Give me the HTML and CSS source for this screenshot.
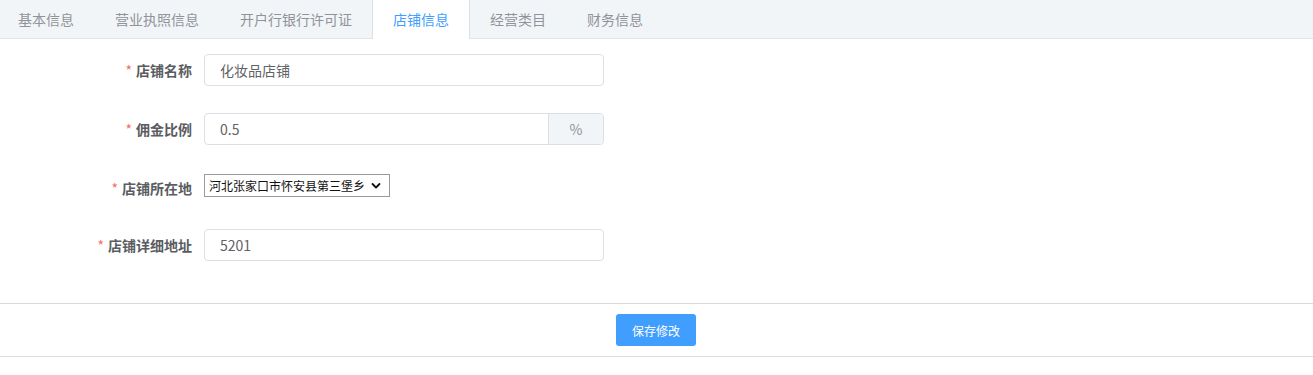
FILE: index.html
```html
<!DOCTYPE html>
<html lang="zh">
<head>
<meta charset="utf-8">
<title>店铺信息</title>
<link rel="stylesheet" href="styles.css">
</head>
<body>
<div class="card">
  <div class="tabs-header">
    <div class="tabs-nav">
      <div class="tab">基本信息</div>
      <div class="tab">营业执照信息</div>
      <div class="tab">开户行银行许可证</div>
      <div class="tab active">店铺信息</div>
      <div class="tab">经营类目</div>
      <div class="tab">财务信息</div>
    </div>
  </div>
  <div class="tabs-content">
    <form class="form">
      <div class="form-item">
        <label class="label"><span class="req">*</span>店铺名称</label>
        <div class="control">
          <div class="input"><span class="value">化妆品店铺</span></div>
        </div>
      </div>
      <div class="form-item">
        <label class="label"><span class="req">*</span>佣金比例</label>
        <div class="control">
          <div class="input group"><span class="value">0.5</span><span class="append">%</span></div>
        </div>
      </div>
      <div class="form-item form-item-select">
        <label class="label"><span class="req">*</span>店铺所在地</label>
        <div class="control">
          <div class="select"><span>河北张家口市怀安县第三堡乡</span>
            <svg class="chev" width="10" height="8" viewBox="0 0 10 8"><path d="M1.5 2 L5 5.5 L8.5 2" fill="none" stroke="#111" stroke-width="1.8" stroke-linecap="round" stroke-linejoin="round"/></svg>
          </div>
        </div>
      </div>
      <div class="form-item">
        <label class="label"><span class="req">*</span>店铺详细地址</label>
        <div class="control">
          <div class="input"><span class="value">5201</span></div>
        </div>
      </div>
    </form>
  </div>
  <div class="footer">
    <button class="btn" type="button">保存修改</button>
  </div>
</div>
</body>
</html>
```

FILE: styles.css
```css
html, body {
  margin: 0;
  padding: 0;
  background: #fff;
  font-family: "Noto Sans CJK SC", "Noto Sans", sans-serif;
}

.card {
  width: 100%;
}

.tabs-header {
  height: 38px;
  background: #f2f5f8;
  border-bottom: 1px solid #dfe4ea;
}

.tabs-nav {
  display: flex;
  margin-left: -3px;
}

.tab {
  height: 38px;
  line-height: 38px;
  padding: 0 20px;
  border-left: 1px solid transparent;
  border-right: 1px solid transparent;
  font-size: 14px;
  color: #909399;
  white-space: nowrap;
}

.tab + .tab {
  margin-left: -1px;
}

.tab.active {
  background: #fff;
  color: #409eff;
  border-left-color: #dcdfe6;
  border-right-color: #dcdfe6;
  height: 39px;
  margin-bottom: -1px;
}

.tabs-content {
  padding: 15px 0 42px;
}

.form {
  display: flex;
  flex-direction: column;
  gap: 27px;
}

.form-item {
  display: flex;
  align-items: flex-start;
}

.form-item-select {
  margin-bottom: -2px;
}

.label {
  width: 192px;
  padding-right: 12px;
  text-align: right;
  line-height: 32px;
  font-size: 14px;
  font-weight: 700;
  color: #5a5c61;
}

.req {
  color: #f56c6c;
  font-weight: 400;
  margin-right: 4px;
}

.control {
  width: 400px;
}

.input {
  height: 30px;
  border: 1px solid #dcdfe6;
  border-radius: 4px;
  display: flex;
  align-items: center;
  font-size: 14px;
  color: #606266;
  overflow: hidden;
}

.value {
  flex: 1;
  padding: 0 15px;
}

.append {
  width: 54px;
  height: 30px;
  line-height: 30px;
  text-align: center;
  background: #f2f5f8;
  border-left: 1px solid #dcdfe6;
  color: #909399;
}

.select {
  display: inline-flex;
  align-items: center;
  gap: 6px;
  height: 21px;
  margin-top: -1px;
  padding: 0 8px 0 4px;
  border: 1px solid #9a9a9a;
  font-size: 12px;
  color: #111;
  background: #fff;
  white-space: nowrap;
}

.chev {
  display: block;
}

.footer {
  border-top: 1px solid #d6d9df;
  border-bottom: 1px solid #dcdde2;
  padding: 10px 1px 10px 0;
  display: flex;
  justify-content: center;
  box-shadow: 0 5px 6px -2px rgba(0, 0, 0, 0.18);
}

.btn {
  width: 80px;
  height: 32px;
  border: none;
  border-radius: 3px;
  background: #409eff;
  color: #fff;
  font-family: inherit;
  font-size: 12px;
  padding: 0;
}
```
